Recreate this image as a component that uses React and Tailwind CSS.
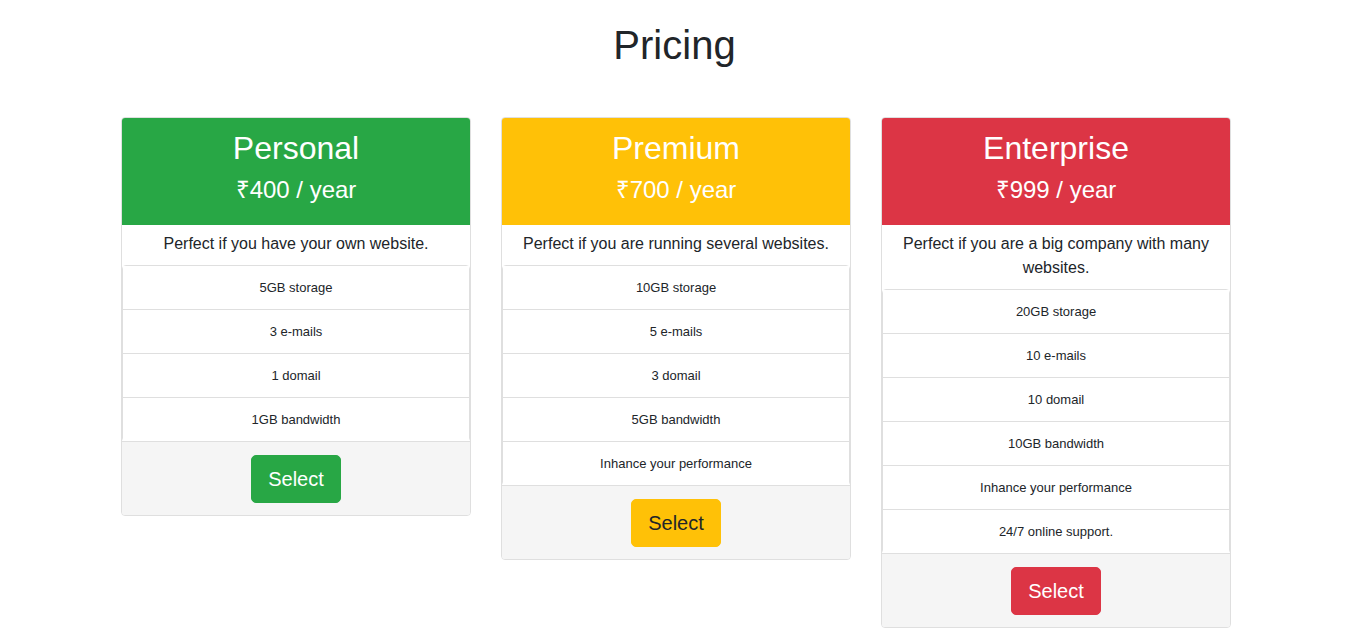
const plans = [
  {
    name: "Personal",
    price: "₹400 / year",
    desc: "Perfect if you have your own website.",
    features: ["5GB storage", "3 e-mails", "1 domail", "1GB bandwidth"],
    head: "bg-[#28a745]",
    btn: "bg-[#28a745] text-white border-[#28a745]",
  },
  {
    name: "Premium",
    price: "₹700 / year",
    desc: "Perfect if you are running several websites.",
    features: ["10GB storage", "5 e-mails", "3 domail", "5GB bandwidth", "Inhance your performance"],
    head: "bg-[#ffc107]",
    btn: "bg-[#ffc107] text-[#212529] border-[#ffc107]",
  },
  {
    name: "Enterprise",
    price: "₹999 / year",
    desc: "Perfect if you are a big company with many websites.",
    features: [
      "20GB storage",
      "10 e-mails",
      "10 domail",
      "10GB bandwidth",
      "Inhance your performance",
      "24/7 online support.",
    ],
    head: "bg-[#dc3545]",
    btn: "bg-[#dc3545] text-white border-[#dc3545]",
  },
];

export default function App() {
  return (
    <div
      className="min-h-screen bg-white text-[#212529]"
      style={{ fontFamily: '"Liberation Sans", Arial, sans-serif' }}
    >
      <h1 className="pt-[21px] mb-[48px] text-center text-[40px] leading-[48px] font-normal">
        Pricing
      </h1>
      <div className="flex items-start gap-[30px] pl-[121px]">
        {plans.map((p) => (
          <div
            key={p.name}
            className="w-[350px] border border-[#dfdfdf] rounded-[4px] overflow-hidden bg-white"
          >
            <div className={`${p.head} text-white text-center pt-[11px] pb-[13px]`}>
              <h2 className="text-[32px] leading-[38px] mb-2 font-normal">{p.name}</h2>
              <h4 className="text-[24px] leading-[29px] mb-2 font-normal">{p.price}</h4>
            </div>
            <p className="text-center text-[16px] leading-[24px] px-5 pt-[7px] pb-[9px]">{p.desc}</p>
            <ul className="border border-[#dfdfdf] rounded-[4px] divide-y divide-[#dfdfdf]">
              {p.features.map((f) => (
                <li key={f} className="text-center text-[13px] leading-[19px] py-3 bg-white">
                  {f}
                </li>
              ))}
            </ul>
            <div className="bg-[#f5f5f5] border-t border-[#dfdfdf] -mt-px flex justify-center pt-[13px] pb-[12px]">
              <button
                className={`${p.btn} border rounded-[5px] px-4 py-2 text-[20px] leading-[30px]`}
              >
                Select
              </button>
            </div>
          </div>
        ))}
      </div>
    </div>
  );
}
